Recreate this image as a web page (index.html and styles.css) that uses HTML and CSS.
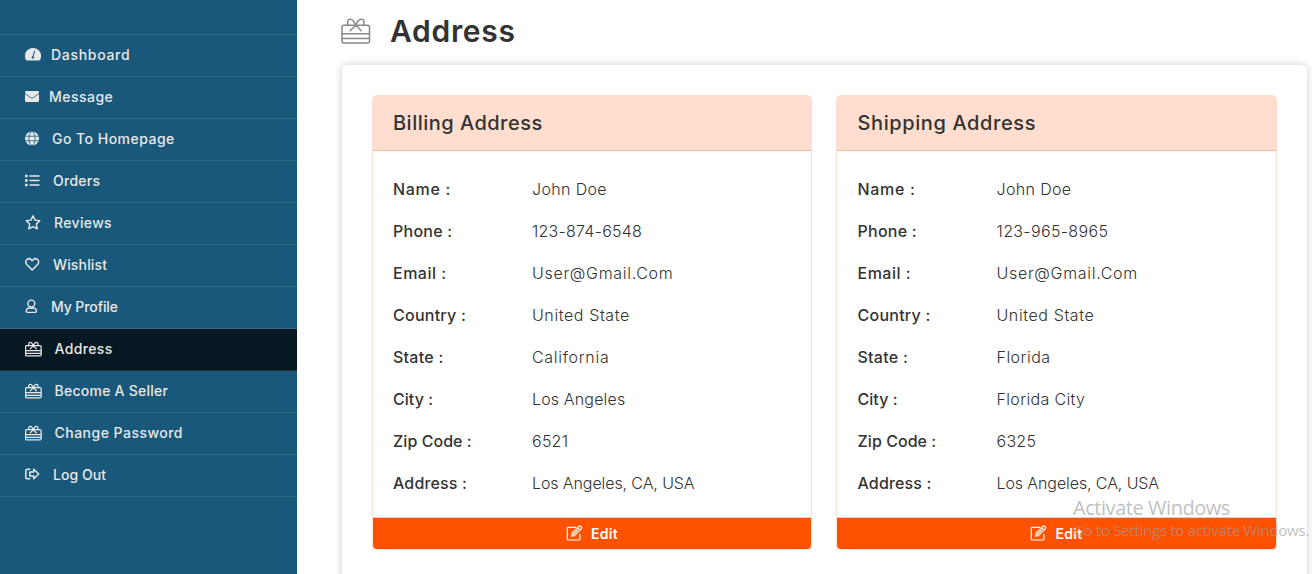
FILE: index.html
```html
<!DOCTYPE html>
<html lang="en">
<head>
<meta charset="utf-8">
<title>Address</title>
<link rel="stylesheet" href="styles.css">
</head>
<body>
<svg class="defs" width="0" height="0">
  <symbol id="gift" viewBox="0 0 30 28"><g fill="none" stroke="currentColor" stroke-linejoin="round" stroke-linecap="round"><rect x="1" y="8.2" width="27.5" height="17.8" rx="2"/><path d="M1 16.8h27.5M1 21.6h27.5M14.7 8.2C13.2 4 10.8 1.8 8.6 2.2 6.2 2.8 6.2 6.2 7.2 8.2M14.7 8.2C16.2 4 18.8 1.8 21 2.2c2.4.6 2.4 4 1.4 6M9.2 13.8l5.5-5.6 5.5 5.6"/></g></symbol>
  <symbol id="edit" viewBox="0 0 16 16"><g fill="none" stroke="currentColor" stroke-width="1.2" stroke-linejoin="round" stroke-linecap="round"><path d="M9.3 2.4H1.7a.9.9 0 0 0-.9.9v10.8c0 .5.4.9.9.9h10.8c.5 0 .9-.4.9-.9V9.3"/><path d="M5 11.2l.5-3L12.3 1.400a1.300 1.300 0 0 1 1.800 0l.6.6a1.300 1.300 0 0 1 0 1.800L8 10.600zM11 2.700l2.400 2.400M6.800 9.400l4.200-4.200"/></g></symbol>
</svg>
<div class="page">
  <nav class="sidebar">
    <ul class="menu">
      <li class="item"><svg class="icon w16" viewBox="0 0 16 14"><path fill="currentColor" d="M8 .4a8 8 0 0 0-7.100 11.800c.2.500.600.800 1.100.800h12c.5 0 .9-.3 1.100-.800A8 8 0 0 0 8 .4z"/><g class="hole"><path d="M9.600 3.200L8.200 8.600M8.200 8.600v1.200"/><circle cx="7.800" cy="10" r=".8"/></g></svg><span class="t8">Dashboard</span></li>
      <li class="item"><svg class="icon w14" viewBox="0 0 14 12"><rect y=".5" width="14" height="11" rx="1.300" fill="currentColor"/><path class="thin" d="M0 3l5.200 3.900c1.200.9 2.400.9 3.600 0L14 3"/></svg><span class="t6">Message</span></li>
      <li class="item"><svg class="icon w14" viewBox="0 0 14 14"><circle cx="7" cy="7" r="7" fill="currentColor"/><g class="thin"><ellipse cx="7" cy="7" rx="3.100" ry="7"/><path d="M0 4.700h14M0 9.300h14"/></g></svg><span class="gap13 t6">Go To Homepage</span></li>
      <li class="item"><svg class="icon w15" viewBox="0 0 15 14"><path d="M4.500 2.500h10M4.500 7h10M4.500 11.500h10" stroke="currentColor" stroke-width="1.700"/><path fill="currentColor" d="M0 1.200h2.600v2.600H0zM0 5.700h2.600v2.600H0zM0 10.200h2.600v2.600H0z"/></svg><span class="gap13 t4">Orders</span></li>
      <li class="item"><svg class="icon w16 line" viewBox="0 0 16 16"><path d="M8 .9l2.200 4.600 5 .7-3.600 3.500.9 5L8 12.300l-4.500 2.400.9-5L.8 6.200l5-.7z"/></svg><span class="gap13 t5">Reviews</span></li>
      <li class="item"><svg class="icon w15 line" viewBox="0 0 15 14"><path d="M7.200 12.500L1.800 7C.3 5.400.4 3.200 1.900 2c1.300-1.100 3.200-.9 4.300.2l1 1.100 1-1.100c1.100-1.100 3-1.300 4.300-.2 1.500 1.200 1.600 3.400.1 5z"/></svg><span class="gap13 t3">Wishlist</span></li>
      <li class="item"><svg class="icon w13 line" viewBox="0 0 13 16"><circle cx="6.300" cy="4.900" r="3.700"/><path d="M3.700 9.400C1.800 9.900.8 11.200.8 12.900c0 .9.500 1.400 1.300 1.400h8.400c.8 0 1.300-.5 1.300-1.400 0-1.700-1-3-2.900-3.500-1.600.7-3.600.7-5.200 0z"/></svg><span class="gap13 t0">My Profile</span></li>
      <li class="item active"><svg class="icon gift"><use href="#gift"/></svg><span class="gap12 t5">Address</span></li>
      <li class="item"><svg class="icon gift"><use href="#gift"/></svg><span class="gap12 t4">Become A Seller</span></li>
      <li class="item"><svg class="icon gift"><use href="#gift"/></svg><span class="gap12 t6">Change Password</span></li>
      <li class="item"><svg class="icon w15 line" viewBox="0 0 15 14"><path d="M5.200 1.700H2.600C1.500 1.700.8 2.400.8 3.500v6c0 1.100.7 1.800 1.800 1.800h2.600M8.700 1.800v2.800H4.800v3.800h3.900v2.800L13.800 6.500z"/></svg><span class="gap13 t2">Log Out</span></li>
    </ul>
  </nav>
  <main class="main">
    <h1 class="title"><svg class="title-icon"><use href="#gift"/></svg><span class="heading">Address</span></h1>
    <div class="panel">
      <section class="card">
        <h2 class="card-title t6">Billing Address</h2>
        <dl class="details">
          <dt class="t8">Name :</dt><dd class="t5">John Doe</dd>
          <dt class="t4">Phone :</dt><dd class="t4">123-874-6548</dd>
          <dt class="t6">Email :</dt><dd class="t8">User@Gmail.Com</dd>
          <dt class="t4">Country :</dt><dd class="t7">United State</dd>
          <dt class="t4">State :</dt><dd class="t8">California</dd>
          <dt class="t2">City :</dt><dd class="t3">Los Angeles</dd>
          <dt class="t2">Zip Code :</dt><dd class="t4">6521</dd>
          <dt class="t3">Address :</dt><dd class="t0">Los Angeles, CA, USA</dd>
        </dl>
        <button class="edit"><svg class="edit-icon"><use href="#edit"/></svg><span class="t5">Edit</span></button>
      </section>
      <section class="card">
        <h2 class="card-title shifted t7">Shipping Address</h2>
        <dl class="details shifted">
          <dt class="t8">Name :</dt><dd class="t5">John Doe</dd>
          <dt class="t4">Phone :</dt><dd class="t5">123-965-8965</dd>
          <dt class="t6">Email :</dt><dd class="t8">User@Gmail.Com</dd>
          <dt class="t4">Country :</dt><dd class="t7">United State</dd>
          <dt class="t4">State :</dt><dd class="t6">Florida</dd>
          <dt class="t2">City :</dt><dd class="t5">Florida City</dd>
          <dt class="t2">Zip Code :</dt><dd class="t4">6325</dd>
          <dt class="t3">Address :</dt><dd class="t0">Los Angeles, CA, USA</dd>
        </dl>
        <button class="edit"><svg class="edit-icon"><use href="#edit"/></svg><span class="t5">Edit</span></button>
      </section>
    </div>
  </main>
</div>
<div class="watermark"><div class="wm-title">Activate Windows</div><div class="wm-text">Go to Settings to activate Windows.</div></div>
</body>
</html>
```
FILE: styles.css
```css
* { box-sizing: border-box; }
body { margin: 0; font-family: Inter, "Open Sans", sans-serif; color: #333; background: #fff; overflow: hidden; }
.defs { position: absolute; }
.page { display: flex; height: 574px; overflow: hidden; }

/* Sidebar */
.sidebar { width: 297px; flex: none; background: #19587a; padding-top: 34px; }
.menu { list-style: none; margin: 0; padding: 0; border-top: 1px solid #326b8a; }
.item { display: flex; align-items: center; height: 42px; padding: 0 0 2px 25px; border-bottom: 1px solid #2f6988; color: #e8e8e8; font-size: 14px; font-weight: 500; white-space: nowrap; }
.item span { margin-left: 10px; }
.item .gap12 { margin-left: 12.500px; }
.item .gap13 { margin-left: 13px; }
.active { background: #061922; border-bottom-color: #1e2f37; }
.icon { flex: none; height: 15px; }
.w13 { width: 13px; }
.w14 { width: 14px; }
.w15 { width: 15px; }
.w16 { width: 16px; }
.gift { width: 17px; height: 16px; stroke-width: 2.200; }
.line { fill: none; stroke: currentColor; stroke-width: 1.500; stroke-linejoin: round; }
.hole { stroke: #19587a; fill: #19587a; }
.thin { stroke: #19587a; stroke-width: .8; fill: none; }

/* Main column */
.main { flex: 1; padding: 0 5px 0 45px; }
.title { display: flex; align-items: center; height: 65px; margin: 0; padding-bottom: 4px; font-size: 30px; font-weight: 600; }
.title-icon { width: 30px; height: 28px; margin-right: 19px; color: #888; stroke-width: 1.500; margin-left: -1px; }
.heading { letter-spacing: .7px; }
.panel { display: grid; grid-template-columns: 440px 441px; gap: 24px; align-items: start; height: 560px; padding: 30px; border-radius: 5px; box-shadow: 0 0 8px rgba(0, 0, 0, .2); }
.card { border: 1px solid #ffddcf; border-radius: 5px; overflow: hidden; }
.card-title { height: 55px; margin: 0; padding-left: 20px; background: #ffddcf; border-bottom: 1px solid #ffbd9f; font-size: 20px; font-weight: 450; line-height: 54px; }
.details { display: grid; grid-template-columns: 139px 1fr; grid-auto-rows: 42px; align-items: center; margin: 0; padding: 17px 20px 13px; font-size: 16px; white-space: nowrap; }
.details dt { font-weight: 500; }
.details dd { margin: 0; font-weight: 300; }
.shifted { padding-left: 20.500px; }
.edit { display: flex; align-items: center; justify-content: center; gap: 8px; width: 100%; height: 32px; padding: 0 0 1px; border: 0; border-top: 1px solid #d5cfd0; background: #ff5200; color: #fff; font: 600 14px Inter, sans-serif; }
.edit-icon { width: 17px; height: 16px; }

/* Tracking steps */
.t0 { letter-spacing: -.1px; }
.t2 { letter-spacing: .05px; }
.t3 { letter-spacing: .15px; }
.t4 { letter-spacing: .25px; }
.t5 { letter-spacing: .35px; }
.t6 { letter-spacing: .48px; }
.t7 { letter-spacing: .6px; }
.t8 { letter-spacing: .7px; }

/* Activation notice laid over the page */
.watermark { position: absolute; left: 1073px; top: 495px; color: rgba(155, 155, 155, .65); font-family: "Open Sans", sans-serif; white-space: nowrap; }
.wm-title { font-size: 20px; line-height: 26px; letter-spacing: -.45px; }
.wm-text { font-size: 15px; line-height: 18px; letter-spacing: -.28px; }
```
